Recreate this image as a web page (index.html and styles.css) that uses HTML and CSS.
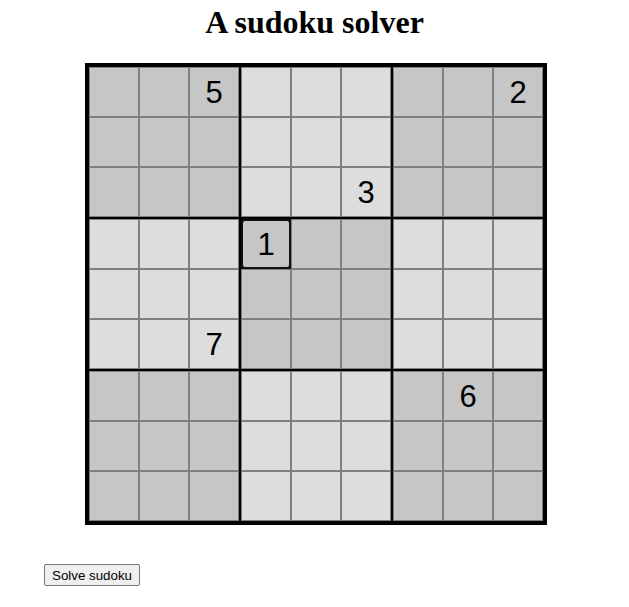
FILE: index.html
```html
<!DOCTYPE html>
<html>
<head>
<meta charset="utf-8">
<link rel="stylesheet" href="styles.css">
</head>
<body>
<h1 class="title">A sudoku solver</h1>
<div class="board">
  <div class="block dark">
    <div class="cell"></div><div class="cell"></div><div class="cell">5</div>
    <div class="cell"></div><div class="cell"></div><div class="cell"></div>
    <div class="cell"></div><div class="cell"></div><div class="cell"></div>
  </div>
  <div class="block light">
    <div class="cell"></div><div class="cell"></div><div class="cell"></div>
    <div class="cell"></div><div class="cell"></div><div class="cell"></div>
    <div class="cell"></div><div class="cell"></div><div class="cell">3</div>
  </div>
  <div class="block dark">
    <div class="cell"></div><div class="cell"></div><div class="cell">2</div>
    <div class="cell"></div><div class="cell"></div><div class="cell"></div>
    <div class="cell"></div><div class="cell"></div><div class="cell"></div>
  </div>
  <div class="block light">
    <div class="cell"></div><div class="cell"></div><div class="cell"></div>
    <div class="cell"></div><div class="cell"></div><div class="cell"></div>
    <div class="cell"></div><div class="cell"></div><div class="cell">7</div>
  </div>
  <div class="block dark">
    <div class="cell focus">1</div><div class="cell"></div><div class="cell"></div>
    <div class="cell"></div><div class="cell"></div><div class="cell"></div>
    <div class="cell"></div><div class="cell"></div><div class="cell"></div>
  </div>
  <div class="block light">
    <div class="cell"></div><div class="cell"></div><div class="cell"></div>
    <div class="cell"></div><div class="cell"></div><div class="cell"></div>
    <div class="cell"></div><div class="cell"></div><div class="cell"></div>
  </div>
  <div class="block dark">
    <div class="cell"></div><div class="cell"></div><div class="cell"></div>
    <div class="cell"></div><div class="cell"></div><div class="cell"></div>
    <div class="cell"></div><div class="cell"></div><div class="cell"></div>
  </div>
  <div class="block light">
    <div class="cell"></div><div class="cell"></div><div class="cell"></div>
    <div class="cell"></div><div class="cell"></div><div class="cell"></div>
    <div class="cell"></div><div class="cell"></div><div class="cell"></div>
  </div>
  <div class="block dark">
    <div class="cell"></div><div class="cell">6</div><div class="cell"></div>
    <div class="cell"></div><div class="cell"></div><div class="cell"></div>
    <div class="cell"></div><div class="cell"></div><div class="cell"></div>
  </div>
</div>
<div class="actions">
  <button class="solve" type="button">Solve sudoku</button>
</div>
</body>
</html>
```

FILE: styles.css
```css
html, body {
  margin: 0;
  padding: 0;
  background: #ffffff;
}

body {
  width: 629px;
}

.title {
  margin: 4px 0 0 0;
  text-align: center;
  font-family: "Liberation Serif", "Times New Roman", serif;
  font-size: 32px;
  font-weight: bold;
  line-height: 36px;
  color: #000;
}

.board {
  margin: 23px 0 0 85px;
  width: 454px;
  display: grid;
  grid-template-columns: repeat(3, 150px);
  grid-template-rows: repeat(3, 150px);
  gap: 2px;
  background: #000;
  border: 4px solid #000;
  box-sizing: content-box;
}

.block {
  display: grid;
  grid-template-columns: repeat(3, 50px);
  grid-template-rows: repeat(3, 50px);
}

.dark .cell {
  background: #c6c6c6;
}

.light .cell {
  background: #dddddd;
}

.cell {
  box-sizing: border-box;
  border: 1px solid #808080;
  display: flex;
  align-items: center;
  justify-content: center;
  padding-top: 1px;
  font-family: "Liberation Sans", Arial, sans-serif;
  font-size: 31px;
  color: #000;
}

.cell.focus {
  outline: 2px solid #101010;
  outline-offset: -2px;
  border-radius: 4px;
  border-color: #101010;
}

.actions {
  padding: 39px 0 0 44px;
}

.solve {
  font-family: "Liberation Sans", Arial, sans-serif;
  font-size: 13.33px;
  padding: 1px 7px 1px 7px;
  height: 22px;
  background: #efefef;
  border: 1px solid #767676;
  border-radius: 2px;
  color: #000;
}
```
